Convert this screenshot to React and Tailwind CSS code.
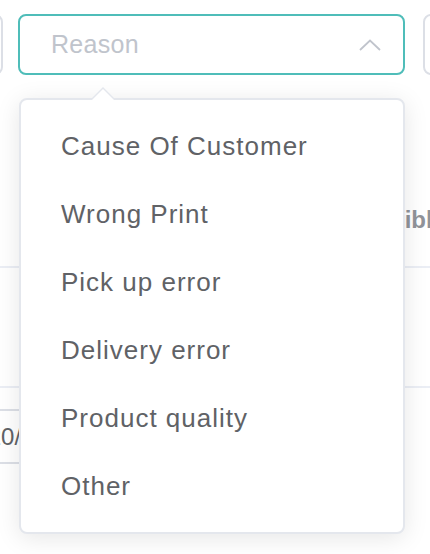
import React from "react";

const items = [
  "Cause Of Customer",
  "Wrong Print",
  "Pick up error",
  "Delivery error",
  "Product quality",
  "Other",
];

export default function App() {
  return (
    <div
      className="relative w-[430px] h-[554px] overflow-hidden bg-white"
      style={{ fontFamily: '"Liberation Sans", Arial, Helvetica, sans-serif' }}
    >
      {/* top row of inputs */}
      <div className="flex pt-[14px] gap-[15px]">
        <div className="ml-[-97px] w-[100px] h-[61px] shrink-0 rounded-[8px] border-2 border-[#dcdfe6] bg-white" />
        <div className="w-[387px] h-[61px] shrink-0 rounded-[8px] border-2 border-[#4fbdb9] bg-white flex items-center pl-[31px] pr-[22px]">
          <span className="flex-1 text-[25px] text-[#c0c4cc] tracking-[0.3px]">Reason</span>
          <svg width="22" height="12" viewBox="0 0 22 12" fill="none">
            <path d="M1 11 L11 1.5 L21 11" stroke="#c0c4cc" strokeWidth="1.8" />
          </svg>
        </div>
        <div className="ml-[3px] w-[100px] h-[61px] shrink-0 rounded-[8px] border-2 border-[#dcdfe6] bg-white" />
      </div>

      {/* table header */}
      <div className="h-[193px] flex items-end justify-end pb-[28px] mr-[-16px] border-b-2 border-[#ebeef5]">
        <span className="text-[24px] font-bold text-[#909399]">Responsible</span>
      </div>
      <div className="h-[120px] border-b-2 border-[#ebeef5]" />
      <div className="pt-[21px]">
        <div className="ml-[-60px] w-[300px] h-[55px] rounded-[8px] border-2 border-[#dcdfe6] flex items-center pl-[19px]">
          <span className="text-[24px] text-[#606266]">2020/ 01</span>
        </div>
      </div>

      {/* dropdown popper */}
      <div className="absolute left-[19px] top-[98px] w-[386px]">
        <div className="absolute left-[72px] top-[-11px] w-0 h-0 border-x-[12px] border-x-transparent border-b-[12px] border-b-[#e4e7ed]" />
        <div className="absolute left-[73px] top-[-9px] w-0 h-0 border-x-[11px] border-x-transparent border-b-[11px] border-b-white" />
        <div className="rounded-[8px] border-2 border-[#e4e7ed] bg-white shadow-[0_4px_24px_rgba(0,0,0,0.1)] py-[12px]">
          {items.map((t) => (
            <div
              key={t}
              className="h-[68px] flex items-center pl-[40px] text-[26px] text-[#606266] tracking-[1px]"
            >
              {t}
            </div>
          ))}
        </div>
      </div>
    </div>
  );
}
